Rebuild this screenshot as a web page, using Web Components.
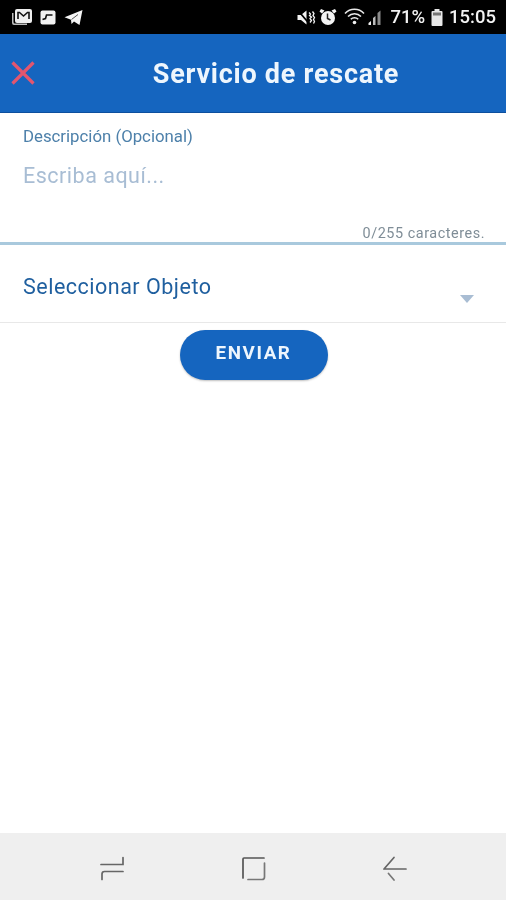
<!DOCTYPE html>
<html lang="es">
<head>
<meta charset="utf-8">
<title>Servicio de rescate</title>
<style>
html,body{margin:0;padding:0;background:#fff}
body{width:506px;height:900px;overflow:hidden;font-family:Roboto,"Liberation Sans",sans-serif}
</style>
</head>
<body>
<app-screen>
  <status-bar slot="top"></status-bar>
  <app-header slot="top" title="Servicio de rescate"></app-header>
  <desc-field label="Descripción (Opcional)" placeholder="Escriba aquí..." counter="0/255 caracteres."></desc-field>
  <object-select label="Seleccionar Objeto"></object-select>
  <send-button>ENVIAR</send-button>
  <nav-bar slot="bottom"></nav-bar>
</app-screen>
<script>
function def(name, html){
  customElements.define(name, class extends HTMLElement{
    connectedCallback(){
      if(this.shadowRoot) return;
      const r=this.attachShadow({mode:'open'});
      r.innerHTML=typeof html==='function'?html(this):html;
    }
  });
}
def('app-screen',`<style>
:host{display:flex;flex-direction:column;width:506px;height:900px;background:#fff}
main{flex:1;display:flex;flex-direction:column;min-height:0}
</style><slot name="top"></slot><main><slot></slot></main><slot name="bottom"></slot>`);

def('status-bar',`<style>
:host{display:flex;align-items:center;justify-content:space-between;height:34px;background:#000;color:#f2f2f2;box-sizing:border-box;padding:0 10px 0 11px;filter:blur(.5px)}
.g{display:flex;align-items:center}
svg{display:block}
.t{font:500 18.500px/34px Roboto,"Liberation Sans",sans-serif;white-space:nowrap}
</style>
<div class="g">
 <svg width="22" height="18" viewBox="0 0 22 18"><path d="M1 5v10a2 2 0 0 0 2 2h13v-1.500H4a1.500 1.500 0 0 1-1.500-1.500V5z" fill="#bdbdbd"/><rect x="4" y="1" width="17" height="14" rx="2" fill="#eee"/><path d="M7 11V4.500h1.500L12.500 8l4-3.500H18V11" fill="none" stroke="#111" stroke-width="1.600"/></svg>
 <svg width="16" height="15" viewBox="0 0 16 15" style="margin-left:7px"><rect x=".5" y=".5" width="15" height="14" rx="2" fill="#f2f2f2"/><path d="M2.500 9.500l3-1 1-3.500h6" fill="none" stroke="#111" stroke-width="1.600"/></svg>
 <svg width="19" height="17" viewBox="0 0 19 17" style="margin-left:8px"><path d="M18.500 1 15.500 16 10 12.500 7.500 15 7 10.800 .5 8.300z" fill="#f4f4f4"/><path d="M7.500 10.500 14 5.500" stroke="#555" stroke-width="1"/></svg>
</div>
<div class="g">
 <svg width="20" height="17" viewBox="0 0 19 17"><path d="M1 6h3.500L10 1.500v14L4.500 11H1z" fill="#f4f4f4"/><path d="M1.500 1.500 13 15" stroke="#000" stroke-width="1.800"/><path d="M12.500 3.500l1.500 1.500-1 1.500 2 1.500-1.500 1.500 1.500 2-1.500 2M16 2.500l1.500 2-1 2 1.500 2-1 2 1 2-1 2" fill="none" stroke="#f4f4f4" stroke-width="1.300"/></svg>
 <svg width="18" height="18" viewBox="0 0 18 18" style="margin-left:3px"><path d="M2 1 .5 3.500 3 5.500 5.500 2.500zM16 1l1.500 2.500L15 5.500 12.500 2.500z" fill="#f4f4f4"/><circle cx="9" cy="10" r="7" fill="#f4f4f4"/><path d="M8.500 5.500V10.500l3 1.500" fill="none" stroke="#222" stroke-width="1.500"/></svg>
 <svg width="22" height="18" viewBox="0 0 22 18" style="margin-left:7px"><g fill="none" stroke="#e8e8e8" stroke-width="1.500"><path d="M1 5.500a13 13 0 0 1 19 0"/><path d="M4 8.500a9 9 0 0 1 13 0"/><path d="M6.800 11.300a5 5 0 0 1 7.400 0"/></g><circle cx="10.500" cy="14.500" r="1.800" fill="#f0f0f0"/></svg>
 <svg width="18" height="17" viewBox="0 0 15 17"><path d="M13 1.500V16H10V4z" fill="#8a8a8a"/><path d="M8 7v9H5.500V9z" fill="#bbb"/><path d="M3.500 12v4H1v-2z" fill="#eee"/></svg>
 <span class="t" style="margin-left:6px">71%</span>
 <svg width="12" height="17" viewBox="0 0 12 17" style="margin-left:6px"><path d="M3.500 0h5v2h2a1 1 0 0 1 1 1v13a1 1 0 0 1-1 1h-9a1 1 0 0 1-1-1V3a1 1 0 0 1 1-1h2z" fill="#e8e8e8"/><rect x="2" y="3.500" width="8" height="3" fill="#777"/></svg>
 <span class="t" style="margin-left:6px">15:05</span>
</div>`);

def('app-header',h=>`<style>
:host{display:block;height:79px;background:#1565bf;border-bottom:1px solid #0d4f9e;box-sizing:border-box;position:relative;filter:blur(.5px)}
.bar{display:flex;align-items:center;height:78px;padding:0 0 0 11px}
svg{display:block;flex:none}
h1{flex:1;margin:0;padding:2px 0 0 11px;text-align:center;color:#eef6fd;font:700 27px/1 Roboto,"Liberation Sans",sans-serif;letter-spacing:.75px;white-space:nowrap}
</style>
<div class="bar">
<svg width="24" height="24" viewBox="0 0 24 24"><path d="M1.500 1.500 22.500 22.500M22.500 1.500 1.500 22.500" stroke="#e2566f" stroke-width="3.200" fill="none"/></svg>
<h1>${h.getAttribute('title')}</h1></div>`);

def('desc-field',h=>`<style>
:host{display:flex;flex-direction:column;height:132px;box-sizing:border-box;padding:14px 21px 0 23px;border-bottom:3px solid #a9c9dd;filter:blur(.5px)}
.l{font:400 16.800px/18px Roboto,"Liberation Sans",sans-serif;color:#4d80aa}
.p{margin-top:18px;font:400 21.500px/26px Roboto,"Liberation Sans",sans-serif;color:#a8bdd4;letter-spacing:.5px;flex:1}
.c{text-align:right;font:400 14.400px/16px Roboto,"Liberation Sans",sans-serif;color:#7f8d97;letter-spacing:.55px}
</style>
<div class="l">${h.getAttribute('label')}</div>
<div class="p">${h.getAttribute('placeholder')}</div>
<div class="c">${h.getAttribute('counter')}</div>`);

def('object-select',h=>`<style>
:host{display:block;height:78px;box-sizing:border-box;padding:0 32px 0 23px;border-bottom:1px solid #e8e8e8;filter:blur(.5px)}
.r{display:flex;justify-content:space-between;height:100%}
.t{margin-top:29px;font:400 21.500px/26px Roboto,"Liberation Sans",sans-serif;color:#1f5f9f;letter-spacing:.5px}
svg{display:block;margin-top:50px}
</style>
<div class="r"><span class="t">${h.getAttribute('label')}</span>
<svg width="14" height="8" viewBox="0 0 14 8"><path d="M0 0h14L7 8z" fill="#a9bdd3"/></svg></div>`);

def('send-button',`<style>
:host{display:flex;justify-content:center;margin:7px 0 0 1px;filter:blur(.5px)}
button{all:unset;box-sizing:border-box;display:flex;align-items:center;justify-content:center;width:148px;height:50px;padding-bottom:3px;border-radius:25px;background:#1565bf;box-shadow:0 1px 2px rgba(0,0,0,.25);color:#eef6fd;font:700 18.800px/1 Roboto,"Liberation Sans",sans-serif;letter-spacing:1.600px}
</style><button><slot></slot></button>`);

def('nav-bar',`<style>
:host{display:flex;align-items:center;justify-content:space-between;height:67px;background:#efefef;box-sizing:border-box;padding:3px 98px 0 99px;filter:blur(.5px)}
svg{display:block;fill:none;stroke-linecap:round}
</style>
<svg width="26" height="26" viewBox="0 0 26 26"><path d="M2 9.500H24V2.500" stroke="#666" stroke-width="1.700"/><path d="M3 24.500V19Q3 16.500 5.500 16.500H24" stroke="#666" stroke-width="1.700"/></svg>
<svg width="26" height="26" viewBox="0 0 26 26"><path d="M2 23V4Q2 3 3 3H23" stroke="#555" stroke-width="1.700"/><path d="M7 24.500H21Q23.500 24.500 23.500 22V8" stroke="#777" stroke-width="1.700"/></svg>
<svg width="26" height="26" viewBox="0 0 26 26"><path d="M2 14H24M12 2.500 2 14" stroke="#666" stroke-width="1.700"/><path d="M6.500 18.500 12 25" stroke="#777" stroke-width="1.700"/></svg>`);
</script>
</body>
</html>
